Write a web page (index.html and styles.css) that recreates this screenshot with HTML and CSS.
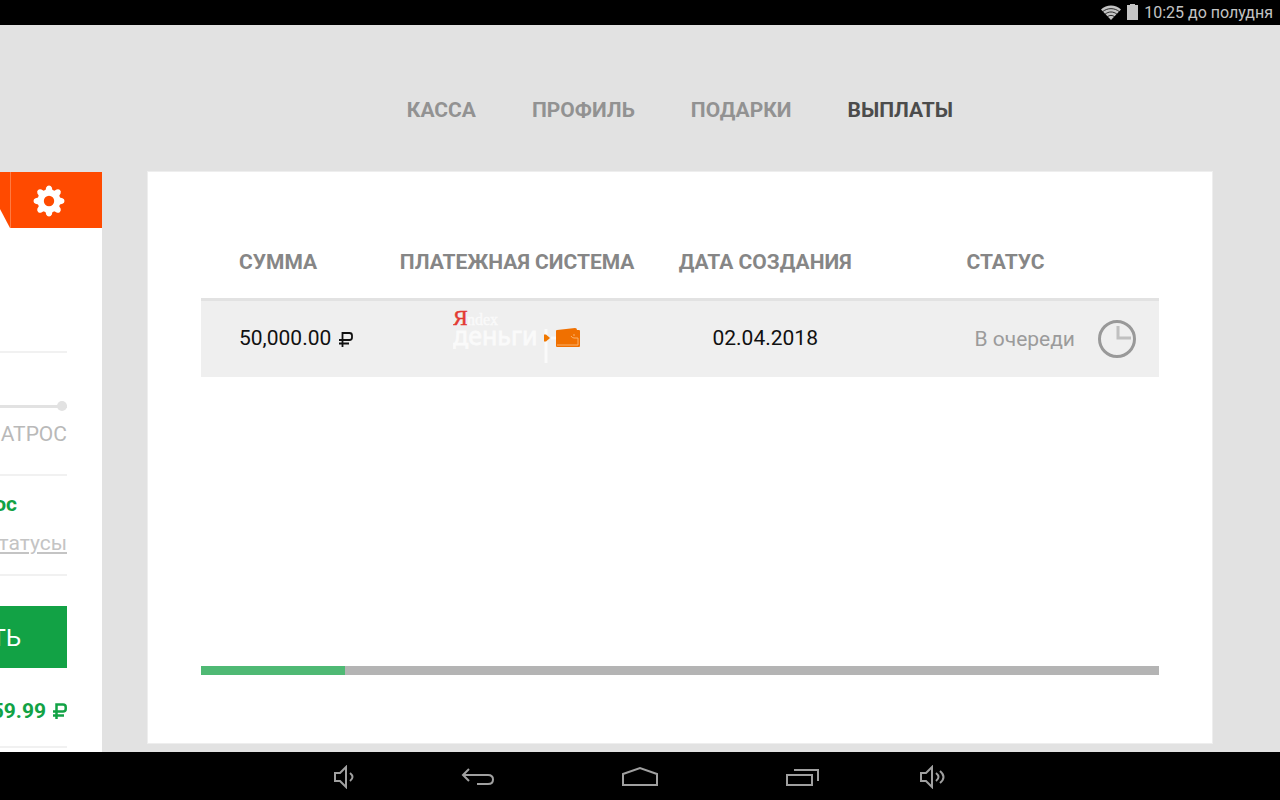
FILE: index.html
```html
<!DOCTYPE html>
<html lang="ru">
<head>
<meta charset="utf-8">
<meta name="viewport" content="width=device-width, initial-scale=1">
<title>Выплаты</title>
<link rel="stylesheet" href="styles.css">
</head>
<body>
<div class="statusbar">
  <svg class="wifi" width="20" height="15" viewBox="0 0 20 15" aria-hidden="true">
    <path d="M0 4.500C5.500-.8 14.500-.8 20 4.500L10 15Z" fill="#c4c4c4"/>
    <path d="M1.500 6.800C6.300 2.600 13.700 2.600 18.500 6.800M4 9.300C7.500 6.200 12.500 6.200 16 9.300M6.300 11.800C8.600 9.900 11.400 9.900 13.700 11.800" fill="none" stroke="#000" stroke-width=".8"/>
  </svg>
  <svg class="battery" width="11" height="16" viewBox="0 0 11 16" aria-hidden="true"><path d="M3 0h5v1h3v15H0V1h3z" fill="#c4c4c4"/></svg>
  <span>10:25 до полудня</span>
</div>

<main class="screen">
  <aside class="sidebar">
    <div class="tabs">
      <svg class="tab-edge" width="10" height="56" viewBox="0 0 10 56" aria-hidden="true"><path d="M0 0h10v56L0 37z" fill="#ff4a00"/></svg>
      <button class="settings" type="button" aria-label="Настройки">
        <svg width="32" height="32" viewBox="-16 -16 32 32" aria-hidden="true">
          <g fill="#fff">
            <circle r="11.500"/>
            <path id="tooth" d="M-4-9L-2.800-13.500Q-2-15.500 0-15.500T2.800-13.500L4-9V9L2.800 13.500Q2 15.500 0 15.500T-2.800 13.500L-4 9Z"/>
            <use href="#tooth" transform="rotate(45)"/>
            <use href="#tooth" transform="rotate(90)"/>
            <use href="#tooth" transform="rotate(135)"/>
          </g>
          <circle r="5.200" fill="#ff4a00"/>
        </svg>
      </button>
    </div>
    <div class="block block-top"></div>
    <div class="block block-level">
      <div class="track"><span class="dot"></span></div>
      <div class="level">АТРОС</div>
    </div>
    <div class="block block-rank">
      <strong class="rank">ос</strong>
      <a class="statuses" href="#">татусы</a>
    </div>
    <div class="block block-pay">
      <button class="pay" type="button">ТЬ</button>
      <div class="balance">
        <span>59.99</span>
        <svg width="14" height="16" viewBox="0 0 14 16" role="img" aria-label="₽"><path d="M3.500 16V1.500H10Q12.700 1.500 12.700 4V6Q12.700 8.500 10 8.500H0M0 12.500H11" fill="none" stroke="currentColor" stroke-width="2.500"/></svg>
      </div>
    </div>
  </aside>

  <section class="content">
    <nav class="menu">
      <a href="#">КАССА</a>
      <a href="#">ПРОФИЛЬ</a>
      <a href="#">ПОДАРКИ</a>
      <a href="#" class="active" aria-current="page">ВЫПЛАТЫ</a>
    </nav>
    <div class="card">
      <table class="payouts">
        <thead>
          <tr>
            <th class="sum">СУММА</th>
            <th class="system">ПЛАТЕЖНАЯ СИСТЕМА</th>
            <th class="date">ДАТА СОЗДАНИЯ</th>
            <th class="status">СТАТУС</th>
          </tr>
        </thead>
        <tbody>
          <tr>
            <td class="sum">50,000.00
              <svg class="ruble" width="14" height="16" viewBox="0 0 14 16" role="img" aria-label="₽"><path d="M3.500 16V2H10.500Q13 2 13 4.500V6.500Q13 9 10.500 9H0M0 12.500H10" fill="none" stroke="currentColor" stroke-width="1.800"/></svg>
            </td>
            <td class="system">
              <svg class="yandex" width="128" height="64" viewBox="0 0 128 64" role="img" aria-label="Яндекс деньги">
                <text x="0" y="18" class="logo-ya">Я</text>
                <text x="14" y="18" class="logo-ndex">ndex</text>
                <text x="0" y="38" class="logo-money">деньги</text>
                <path d="M93 22v34M98 31h6" stroke="#fafafa" stroke-width="3"/>
                <path d="M91 27.500h2l4 3.500-4 3.500h-2z" fill="#f07800"/>
                <path d="M103 24q0-1 1-1l18-2q2 0 2 2h2q1 0 1 1v15q0 1-1 1h-22q-1 0-1-1z" fill="#f07000"/>
                <path d="M104 38h21v-7h-4q-2 0-3-2M121 27v2" fill="none" stroke="#fbb06a" stroke-width="1"/>
              </svg>
            </td>
            <td class="date">02.04.2018</td>
            <td class="status">
              <div class="queue">
                <span>В очереди</span>
                <svg class="clock" width="38" height="38" viewBox="0 0 38 38" aria-hidden="true">
                  <circle cx="19" cy="19" r="17.500" fill="none" stroke="#999" stroke-width="3"/>
                  <path d="M20 6v12h13" fill="none" stroke="#c0c0c0" stroke-width="3"/>
                </svg>
              </div>
            </td>
          </tr>
        </tbody>
      </table>
      <progress class="scroll" value="15" max="100" aria-label="Прокрутка"></progress>
    </div>
  </section>
</main>

<footer class="navbar">
  <button class="vol" type="button" aria-label="Тише">
    <svg width="30" height="24" viewBox="0 0 30 24"><path d="M5 8h5l6-6v20l-6-6H5zM20 8q5 4 0 8"/></svg>
  </button>
  <button type="button" aria-label="Назад">
    <svg width="34" height="24" viewBox="0 0 34 24"><path d="M8 4L2 10l6 6M2 10H27Q32 10 32 14.500T27 19H16"/></svg>
  </button>
  <button type="button" aria-label="Домой">
    <svg width="36" height="24" viewBox="0 0 36 24"><path d="M1 9L18 3l17 6v11H1z"/></svg>
  </button>
  <button type="button" aria-label="Недавние">
    <svg width="34" height="24" viewBox="0 0 34 24"><path d="M2 10h25v10H2zM9 5h24v11"/></svg>
  </button>
  <button class="vol" type="button" aria-label="Громче">
    <svg width="30" height="24" viewBox="0 0 30 24"><path d="M1 8h5l6-6v20l-6-6H1zM16 8q5 4 0 8M20 6q7 6 0 12"/></svg>
  </button>
</footer>
</body>
</html>
```
FILE: styles.css
```css
* { box-sizing: border-box; }

body {
  margin: 0;
  min-height: 100vh;
  display: grid;
  grid-template-rows: 25px 1fr 48px;
  background: #e2e2e2;
  font-family: Roboto, "Liberation Sans", sans-serif;
  font-size: 21px;
  line-height: 24px;
  color: #111;
}

button {
  border: 0;
  padding: 0;
  background: none;
  font: inherit;
  color: inherit;
}

svg { display: block; }

.statusbar {
  display: flex;
  align-items: center;
  justify-content: flex-end;
  gap: 6px;
  padding: 0 7px;
  background: #000;
  color: #c4c4c4;
  font-size: 16px;
}

.battery { margin-bottom: 2px; }

.screen {
  display: grid;
  grid-template-columns: 102px 1fr;
  column-gap: 45px;
  padding-right: 67px;
  overflow: hidden;
}

.sidebar {
  margin-top: 147px;
  background: #fff;
  overflow: hidden;
}

.tabs {
  display: flex;
  height: 56px;
}

.settings {
  flex: 1;
  display: flex;
  align-items: center;
  padding: 2px 0 0 22px;
  background: #ff4a00;
  border-left: 1px solid #ff7a42;
}

.block {
  margin-right: 35px;
  border-bottom: 2px solid #f1f1f1;
  text-align: right;
}

.block-top { height: 125px; }

.block-level { padding: 48px 0 28px; }

.track {
  display: flex;
  justify-content: flex-end;
  align-items: center;
  height: 10px;
  margin-bottom: 11px;
  background: linear-gradient(#e2e2e2, #e2e2e2) center / 100% 3px no-repeat;
}

.dot {
  width: 10px;
  height: 10px;
  border-radius: 50%;
  background: #e2e2e2;
}

.level { color: #b9b9b9; }

.block-rank {
  display: flex;
  flex-direction: column;
  align-items: flex-end;
  gap: 15px;
  padding: 16px 0 19px;
}

.rank {
  padding-right: 50px;
  color: #12a245;
}

.statuses {
  color: #c4c4c4;
  text-underline-offset: 2px;
}

.block-pay { padding: 30px 0 23px; }

.pay {
  display: flex;
  align-items: center;
  justify-content: flex-end;
  width: 100%;
  height: 62px;
  padding: 2px 46px 0 0;
  background: #12a245;
  color: #fff;
  font-size: 24px;
}

.balance {
  display: flex;
  align-items: center;
  justify-content: flex-end;
  gap: 7px;
  margin-top: 31px;
  color: #12a245;
  font-weight: 700;
}

.balance svg { flex-shrink: 0; }

.content {
  display: flex;
  flex-direction: column;
  padding: 73px 0 8px;
}

.menu {
  display: flex;
  justify-content: center;
  gap: 56px;
  margin-bottom: 49px;
  font-weight: 700;
}

.menu a {
  color: #929292;
  text-decoration: none;
}

.menu .active { color: #4c4c4c; }

.card {
  flex: 1;
  display: flex;
  flex-direction: column;
  justify-content: space-between;
  padding: 53px 53px 68px;
  background: #fff;
  border: 1px solid #eee;
}

.payouts {
  width: 100%;
  border-collapse: separate;
  border-spacing: 0;
  table-layout: fixed;
}

.payouts th {
  height: 76px;
  padding: 0;
  border-bottom: 3px solid #e2e2e2;
  color: #868686;
  font-weight: 700;
  white-space: nowrap;
}

.payouts td {
  height: 76px;
  padding: 0;
  background: #efefef;
  text-align: center;
}

.payouts .sum {
  width: 17%;
  padding-left: 38px;
  text-align: left;
  white-space: nowrap;
}

.payouts .system { width: 32%; }
.payouts .date { width: 20%; padding-right: 2px; }
.payouts .status { width: 31%; }

.payouts th.status { padding-right: 10px; }

.payouts td.sum,
.payouts td.date { padding-bottom: 2px; }

.ruble {
  display: inline-block;
  margin-left: 2px;
  vertical-align: -2px;
}

.yandex { margin: 0 auto; }

.logo-ya {
  font: 22px "Liberation Serif", serif;
  fill: #e33a33;
  stroke: #e33a33;
  stroke-width: .5;
}

.logo-ndex {
  font: 16px "Liberation Serif", serif;
  fill: #fafafa;
  stroke: #fafafa;
  stroke-width: .4;
}

.logo-money {
  font: 25px "Noto Sans", sans-serif;
  fill: #fafafa;
  stroke: #fafafa;
  stroke-width: .8;
}

.queue {
  display: flex;
  align-items: center;
  justify-content: flex-end;
  gap: 23px;
  padding-right: 23px;
  color: #9b9b9b;
}

.scroll {
  appearance: none;
  width: 100%;
  height: 9px;
  border: 0;
}

.scroll::-webkit-progress-bar { background: #b4b4b4; }
.scroll::-webkit-progress-value { background: #4fb974; }

.navbar {
  display: flex;
  justify-content: center;
  background: #000;
}

.navbar button {
  width: 162px;
  display: flex;
  align-items: center;
  justify-content: center;
  padding-top: 2px;
}

.navbar .vol { width: 104px; }

.navbar svg {
  fill: none;
  stroke: #a0a0a0;
  stroke-width: 2;
}
```
